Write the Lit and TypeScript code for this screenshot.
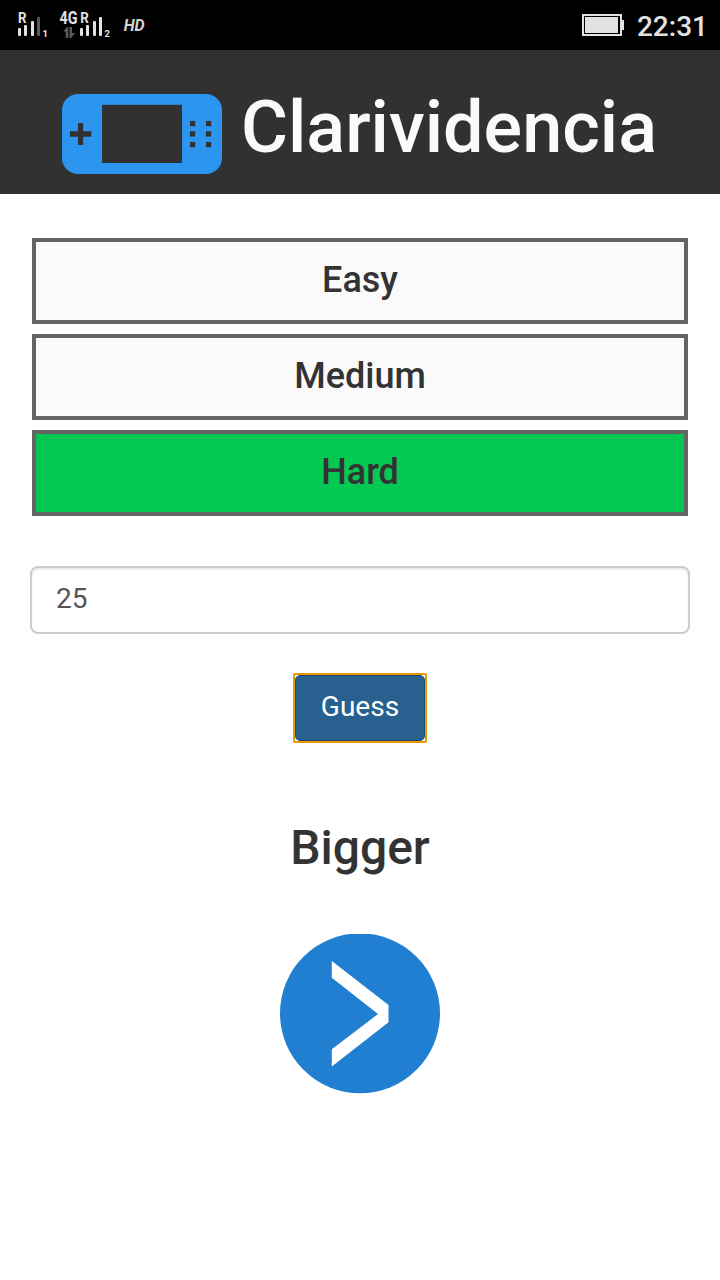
import { LitElement, html, svg, css } from "lit";
import { customElement, state } from "lit/decorators.js";

@customElement("status-bar")
class StatusBar extends LitElement {
  static styles = css`
    :host { display: flex; justify-content: space-between; height: 50px; background: #000; color: #e2e2e2; }
    svg { display: block; fill: #e2e2e2; font-family: Roboto, sans-serif; font-weight: 700; }
    .right { display: flex; padding-right: 12px; gap: 13px; }
    .time { font-size: 28px; line-height: 33px; padding-top: 10px; font-weight: 500; }
    .dim { fill: #5a5a5a; }
    .hd { font-style: italic; font-weight: 700; fill: #d2d2d2; }
  `;
  render() {
    return html`
      <svg width="160" height="50" viewBox="0 0 160 50">
        <text x="18" y="22.6" font-size="15" textLength="8.5" lengthAdjust="spacingAndGlyphs">R</text>
        <rect x="18" y="28" width="3" height="8" rx="1" />
        <rect x="24" y="25" width="3" height="11" rx="1" />
        <rect x="31" y="21" width="3" height="15" rx="1" />
        <rect class="dim" x="37" y="17" width="3" height="19" rx="1" />
        <text x="42.4" y="37" font-size="9.5">1</text>
        <text x="59.5" y="24" font-size="17.5" textLength="18" lengthAdjust="spacingAndGlyphs">4G</text>
        <text x="80.3" y="22.6" font-size="15" textLength="8.5" lengthAdjust="spacingAndGlyphs">R</text>
        <path class="dim" d="M63.5 31L67 27H68.3V38H65.7V31.5H63.5ZM69.5 27H72V33H75L71.2 38H69.5Z" />
        <rect x="80" y="28" width="3" height="8" rx="1" />
        <rect x="86" y="25" width="3" height="11" rx="1" />
        <rect x="93" y="21" width="3" height="15" rx="1" />
        <rect x="99" y="17" width="3" height="19" rx="1" />
        <text x="104.4" y="37" font-size="9.5">2</text>
        <text class="hd" x="123.7" y="31" font-size="17" textLength="21" lengthAdjust="spacingAndGlyphs">HD</text>
      </svg>
      <div class="right">
        <svg width="42" height="50" viewBox="0 0 42 50">
          <path fill-rule="evenodd" d="M0 14H40V20H42V30H40V36H0ZM2 16V34H38V16Z" />
          <rect x="3" y="17" width="33" height="16" />
        </svg>
        <div class="time">22:31</div>
      </div>
    `;
  }
}

@customElement("app-root")
class AppRoot extends LitElement {
  @state() private level = "Hard";

  static styles = css`
    :host { display: block; min-height: 1280px; background: #fff; color: #333; font-family: Roboto, sans-serif; }
    svg { display: block; }
    .header { display: flex; height: 144px; background: #313131; gap: 19px; padding-left: 62px; box-sizing: border-box; }
    .logo { margin-top: 44px; }
    h1 { margin: 38px 0 0; font-size: 72px; line-height: 79px; font-weight: 500; color: #fafafa; }
    .levels { display: flex; flex-direction: column; gap: 10px; padding: 44px 32px 0; }
    .level { box-sizing: border-box; height: 86px; border: 4px solid #646464; background: #fafafa; padding-top: 18px; text-align: center; font-size: 36px; line-height: 40px; font-weight: 500; }
    .level.on { background: #03c953; }
    .form { display: flex; flex-direction: column; align-items: center; padding: 50px 30px 0; }
    input { box-sizing: border-box; width: 100%; height: 68px; border: 2px solid #ccc; border-radius: 8px; padding: 0 24px 4px; font: 400 28px Roboto, sans-serif; color: #555; background: #fff; box-shadow: inset 0 2px 2px rgba(0, 0, 0, 0.075); outline: none; }
    .focus { margin-top: 39px; border: 2px solid #e59700; border-radius: 2px; }
    button { display: block; box-sizing: border-box; width: 130px; height: 66px; margin: 0; padding: 0 0 4px; border: 1px solid #204d74; border-radius: 5px; background: #286090; color: #fff; font: 400 28px Roboto, sans-serif; outline: none; }
    h2 { margin: 78px 0 0; font-size: 48px; line-height: 53px; font-weight: 500; text-align: center; }
    .hint { margin: 60px auto 0; }
  `;

  render() {
    return html`
      <status-bar></status-bar>
      <div class="header">
        <svg class="logo" width="160" height="80" viewBox="0 0 160 80">
          <rect width="160" height="80" rx="16" fill="#2c95f0" />
          <g fill="#313131">
            <rect x="40" y="10.8" width="80" height="58.2" />
            <path d="M16 29H21.2V37.3H29.3V42.7H21.2V51H16V42.7H8V37.3H16Z" />
            ${[27, 37.3, 48].map((y) =>
              [128, 144].map((x) => svg`<rect x=${x} y=${y} width="5.2" height="5.2" />`)
            )}
          </g>
        </svg>
        <h1>Clarividencia</h1>
      </div>
      <div class="levels">
        ${["Easy", "Medium", "Hard"].map(
          (l) => html`<div class="level ${l === this.level ? "on" : ""}" @click=${() => (this.level = l)}>${l}</div>`
        )}
      </div>
      <div class="form">
        <input .value=${"25"} />
        <div class="focus"><button>Guess</button></div>
      </div>
      <h2>Bigger</h2>
      <svg class="hint" width="160" height="160" viewBox="0 0 160 160">
        <circle cx="80" cy="79.3" r="80" fill="#207fd0" />
        <path fill="#fff" d="M51.8 27L108.5 71V88.3L51.8 132.5V115.3L98 80L51.8 43.7Z" />
      </svg>
    `;
  }
}
